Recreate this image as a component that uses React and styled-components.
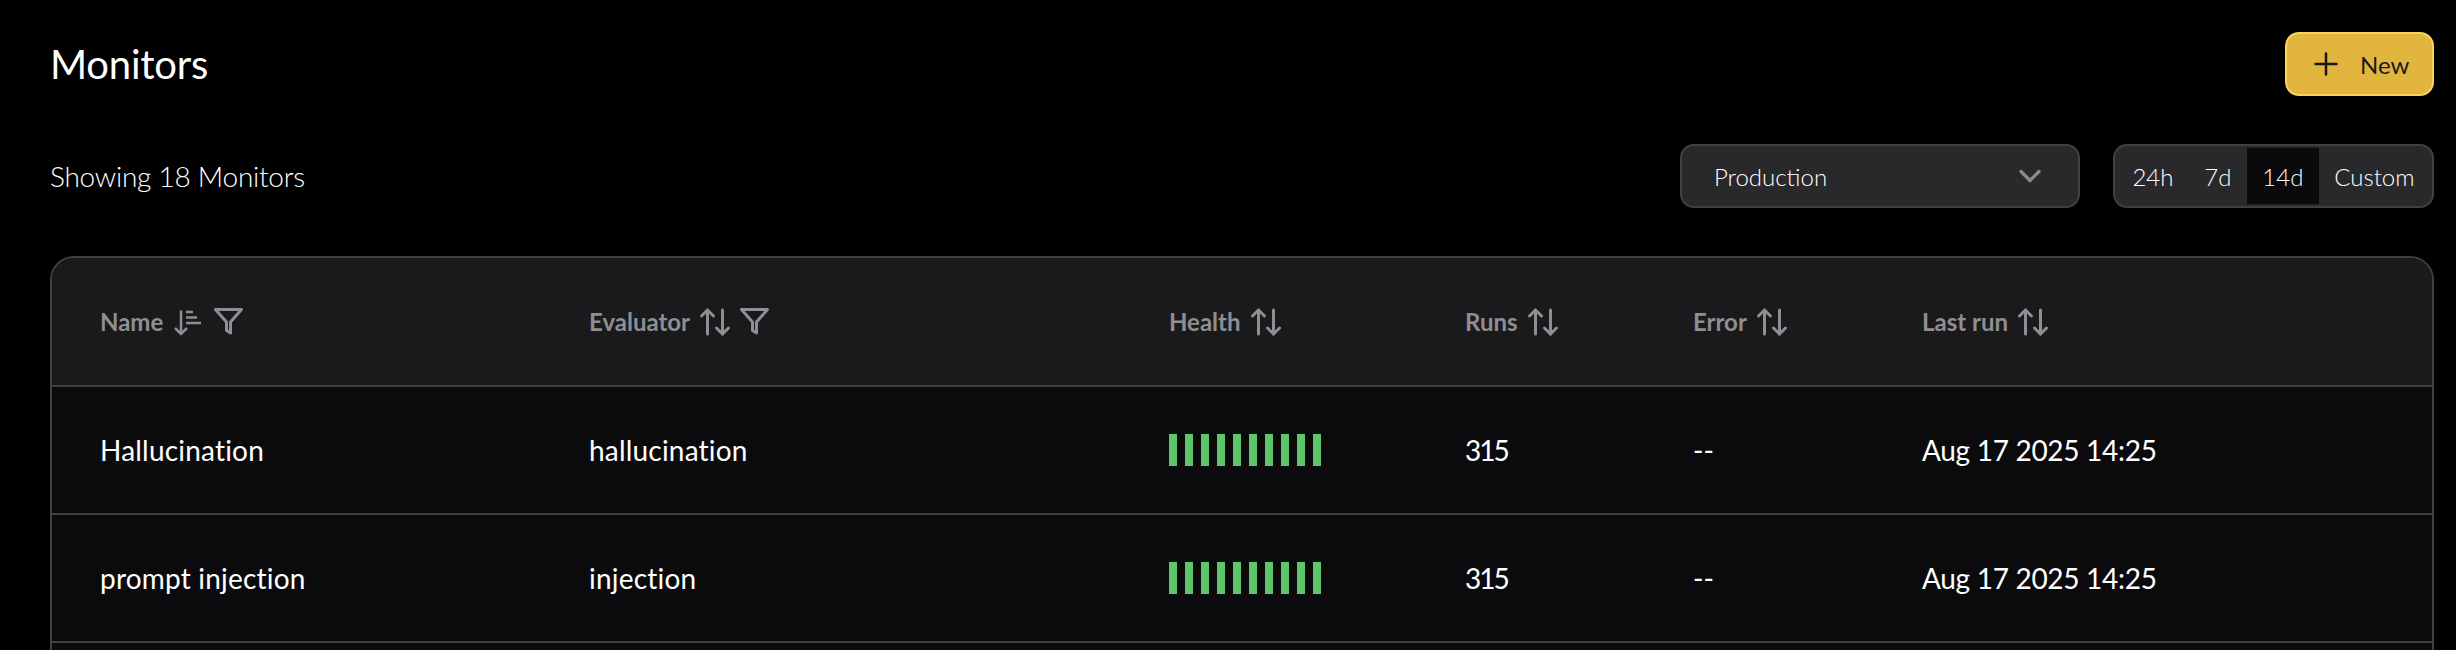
import React from 'react';
import styled, { createGlobalStyle } from 'styled-components';
import { ArrowUpDown, ChevronDown, Plus } from 'lucide-react';

const monitors = [
  { name: 'Hallucination', evaluator: 'hallucination', runs: 315, error: '--', lastRun: 'Aug 17 2025 14:25' },
  { name: 'prompt injection', evaluator: 'injection', runs: 315, error: '--', lastRun: 'Aug 17 2025 14:25' },
];

const ranges = ['24h', '7d', '14d', 'Custom'];
const healthBars = Array.from({ length: 10 });

const SortedIcon = () => (
  <svg width="37" height="36" viewBox="0 0 37 36" fill="none" stroke="currentColor" strokeWidth="2.5">
    <path d="M11 6.5v23.5M5 24l6 6 6-6" />
    <path d="M16 8h7M16 13.5h11M16 19h15" />
  </svg>
);

const FunnelIcon = () => (
  <svg width="30" height="28" viewBox="0 0 30 28" fill="none" stroke="currentColor" strokeWidth="3" strokeLinejoin="round">
    <path d="M1.5 1.5h26L16.5 14v11l-4-2.5V14z" />
  </svg>
);

const SortIcon = () => <ArrowUpDown size={36} strokeWidth={2} />;

const App = () => (
  <Page>
    <GlobalStyle />
    <TitleRow>
      <Title>Monitors</Title>
      <NewButton>
        <Plus size={36} strokeWidth={1.7} />
        New
      </NewButton>
    </TitleRow>
    <FilterRow>
      <Showing>Showing 18 Monitors</Showing>
      <Controls>
        <Select>
          Production
          <ChevronDown size={36} strokeWidth={2.2} color="#8a8a8e" />
        </Select>
        <RangeGroup>
          {ranges.map((range) => (
            <RangeOption key={range} $active={range === '14d'}>{range}</RangeOption>
          ))}
        </RangeGroup>
      </Controls>
    </FilterRow>
    <Table>
      <HeaderRow>
        <HeaderCell>Name<SortedIcon /><FunnelIcon /></HeaderCell>
        <HeaderCell>Evaluator<SortIcon /><FunnelIcon /></HeaderCell>
        <HeaderCell>Health<SortIcon /></HeaderCell>
        <HeaderCell>Runs<SortIcon /></HeaderCell>
        <HeaderCell>Error<SortIcon /></HeaderCell>
        <HeaderCell>Last run<SortIcon /></HeaderCell>
      </HeaderRow>
      {monitors.map((monitor) => (
        <BodyRow key={monitor.name}>
          <span>{monitor.name}</span>
          <span>{monitor.evaluator}</span>
          <Health>
            {healthBars.map((_, i) => <HealthBar key={i} />)}
          </Health>
          <Runs>{monitor.runs}</Runs>
          <span>{monitor.error}</span>
          <LastRun>{monitor.lastRun}</LastRun>
        </BodyRow>
      ))}
    </Table>
  </Page>
);

const GlobalStyle = createGlobalStyle`
  html, body {
    margin: 0;
    height: 100%;
    background: #000;
    overflow: hidden;
  }
`;

const COLUMNS = '489px 580px 296px 228px 229px 1fr';

const Page = styled.div`
  height: 650px;
  overflow: hidden;
  padding: 32px 22px 0 50px;
  box-sizing: border-box;
  font-family: Lato, 'Noto Sans', sans-serif;
  color: #fff;
`;

const TitleRow = styled.div`
  display: flex;
  justify-content: space-between;
  align-items: center;
  height: 64px;
`;

const Title = styled.h1`
  margin: 0;
  font-size: 40px;
  font-weight: 400;
  letter-spacing: -0.2px;
`;

const NewButton = styled.button`
  display: flex;
  align-items: center;
  gap: 16px;
  width: 149px;
  height: 64px;
  padding: 0 0 0 21px;
  box-sizing: border-box;
  border: 2px solid #f7d756;
  border-radius: 14px;
  background: #e2b53f;
  color: #1a1a1c;
  font-family: inherit;
  font-size: 24px;
`;

const FilterRow = styled.div`
  display: flex;
  justify-content: space-between;
  align-items: center;
  height: 64px;
  margin-top: 48px;
`;

const Showing = styled.div`
  font-size: 28px;
  font-weight: 300;
  letter-spacing: -0.25px;
`;

const Controls = styled.div`
  display: flex;
  gap: 33px;
`;

const Select = styled.div`
  display: flex;
  align-items: center;
  justify-content: space-between;
  width: 400px;
  height: 64px;
  padding: 0 30px 0 32px;
  box-sizing: border-box;
  border: 2px solid #3f3f44;
  border-radius: 14px;
  background: #29292c;
  font-size: 24px;
  font-weight: 300;
`;

const RangeGroup = styled.div`
  display: flex;
  width: 321px;
  height: 64px;
  padding: 2px;
  box-sizing: border-box;
  border: 2px solid #3f3f44;
  border-radius: 14px;
  background: #29292c;
  font-size: 24px;
  font-weight: 300;
`;

const RangeOption = styled.div`
  display: flex;
  flex: 1 1 auto;
  align-items: center;
  justify-content: center;
  padding: 0 15px;
  background: ${(props) => (props.$active ? '#0a0a0c' : 'transparent')};
`;

const Table = styled.div`
  min-height: 420px;
  margin-top: 48px;
  border: 2px solid #3f3f44;
  border-radius: 24px;
  overflow: hidden;
  background: #0b0b0d;
`;

const HeaderRow = styled.div`
  display: grid;
  grid-template-columns: ${COLUMNS};
  align-items: center;
  height: 127px;
  padding-left: 48px;
  background: #1a1a1c;
  border-bottom: 2px solid #3f3f44;
`;

const HeaderCell = styled.div`
  display: flex;
  align-items: center;
  gap: 7px;
  font-size: 24px;
  font-weight: 700;
  color: #8e8e93;
`;

const BodyRow = styled.div`
  display: grid;
  grid-template-columns: ${COLUMNS};
  align-items: center;
  height: 126px;
  padding-left: 48px;
  border-bottom: 2px solid #3f3f44;
  font-size: 28px;
  letter-spacing: 0.2px;
`;

const Runs = styled.span`
  letter-spacing: -2px;
`;

const LastRun = styled.span`
  letter-spacing: -0.3px;
`;

const Health = styled.div`
  display: flex;
  gap: 8px;
`;

const HealthBar = styled.div`
  width: 8px;
  height: 32px;
  background: #5fc46a;
`;

export default App;
